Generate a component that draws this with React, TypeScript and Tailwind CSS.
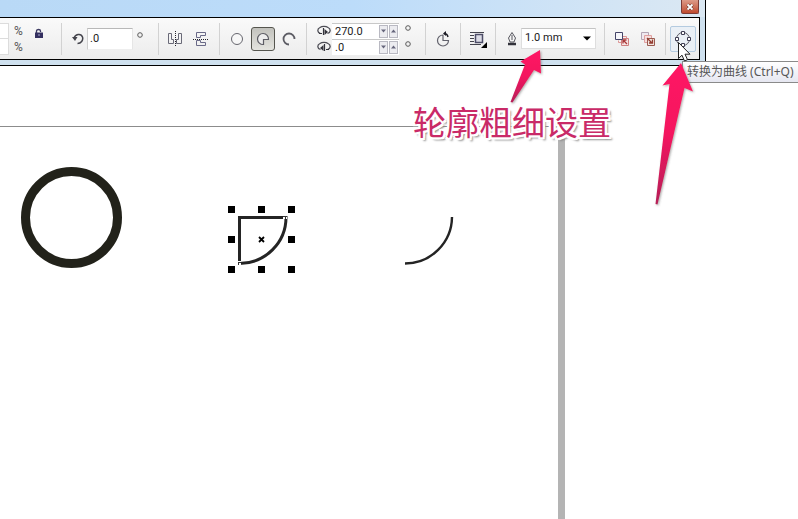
import type { ReactNode } from "react";

type IconProps = { w: number; h: number; children: ReactNode; className?: string };

function Icon({ w, h, children, className = "" }: IconProps) {
  return (
    <svg
      width={w}
      height={h}
      viewBox={`0 0 ${w} ${h}`}
      fill="none"
      stroke="#4b4b63"
      className={`block shrink-0 ${className}`}
      aria-hidden="true"
    >
      {children}
    </svg>
  );
}

function Group({ className, children }: { className: string; children: ReactNode }) {
  return (
    <div className={`flex h-full shrink-0 items-center border-r border-[#d2d2d2] ${className}`}>
      {children}
    </div>
  );
}

function Degree() {
  return (
    <Icon w={6} h={6}>
      <circle cx="3" cy="3" r="2.3" stroke="#5a5a5a" />
    </Icon>
  );
}

function IconButton({ label, className = "", children }: { label: string; className?: string; children: ReactNode }) {
  return (
    <button type="button" aria-label={label} className={`flex shrink-0 items-center justify-center ${className}`}>
      {children}
    </button>
  );
}

function Spinner({ label }: { label: string }) {
  return (
    <div className="flex gap-px pr-px">
      <button type="button" aria-label={`${label} -`} className="flex h-[13px] w-[9px] items-center justify-center border border-[#b9b9c2] bg-[#ececf0]">
        <Icon w={5} h={4}>
          <path d="M0 0.5h5L2.5 3.5z" fill="#66667c" stroke="none" />
        </Icon>
      </button>
      <button type="button" aria-label={`${label} +`} className="flex h-[13px] w-[9px] items-center justify-center border border-[#b9b9c2] bg-[#ececf0]">
        <Icon w={5} h={4}>
          <path d="M0 3.5h5L2.5 0.5z" fill="#66667c" stroke="none" />
        </Icon>
      </button>
    </div>
  );
}

function AngleRow({ label, value, flip }: { label: string; value: string; flip?: boolean }) {
  return (
    <div className="flex h-4 items-center">
      <Icon w={14} h={11} className={flip ? "-scale-x-100" : ""}>
        <path d="M3.5 8.5C0 7.5 0 4 3 2.5c2-1.5 6-1.5 8 0 3 1.5 3 5 -.5 6" stroke="#4d4d55" strokeWidth="1.3" />
        <path d="M6.500 3v7M2 8.500h3" stroke="#33333b" strokeWidth="1.2" />
        <path d="M7.500 4l3.500 3-3.500 3z" fill="#33333b" stroke="none" />
      </Icon>
      <label className="ml-px flex h-4 items-center border-t border-[#c8c8c8] bg-white">
        <input
          aria-label={label}
          defaultValue={value}
          className="h-full w-[47px] bg-transparent pl-[3px] text-[11px] leading-4 text-[#1a1a1a] outline-none"
        />
        <Spinner label={label} />
      </label>
      <div className="mb-[6px] ml-[6px]">
        <Degree />
      </div>
    </div>
  );
}

function PropertyBar() {
  return (
    <div className="mr-[5px] flex h-[43px] items-center overflow-hidden border-y border-r border-black bg-linear-to-b from-[#fafafa] to-[#ececec] font-[Roboto,'Noto_Sans',sans-serif]">
      <div className="flex h-8 w-full items-center">
        <Group className="w-[62px]">
          <div className="flex w-[9px] flex-col">
            <input aria-label="Scale X" className="h-4 w-full border border-l-0 border-[#dcdcdc] bg-white" />
            <input aria-label="Scale Y" className="h-4 w-full border border-t-0 border-l-0 border-[#dcdcdc] bg-white" />
          </div>
          <div className="ml-[5px] flex w-[10px] flex-col text-[12px] leading-4 text-[#555]">
            <span>%</span>
            <span>%</span>
          </div>
          <IconButton label="Lock ratio" className="mb-3 ml-[10px]">
            <Icon w={10} h={10}>
              <path d="M2.5 5V3c0-2 4-2 4 0v1" stroke="#3c3a62" strokeWidth="1.3" />
              <path d="M1 4.5h8V10H1z" fill="#343060" stroke="none" />
              <path d="M5 6v2" stroke="#a9a7cc" />
            </Icon>
          </IconButton>
        </Group>

        <Group className="w-[97px] pl-[10px]">
          <Icon w={12} h={12}>
            <path d="M2 5.5C3 1 9 0 10.5 4c1 3.5-1.5 6.5-5 6.5" stroke="#44444c" strokeWidth="1.5" />
            <path d="M0 4h5.5L3 8z" fill="#44444c" stroke="none" />
          </Icon>
          <input
            aria-label="Rotation"
            defaultValue=".0"
            className="ml-[3px] h-[22px] w-[46px] border border-b-[#eee] border-l-[#d0d0d0] border-r-[#e6e6e6] border-t-[#b8b8b8] bg-white pl-[2px] text-[11px] text-[#1a1a1a] outline-none"
          />
          <div className="mb-2 ml-1">
            <Degree />
          </div>
        </Group>

        <Group className="w-[61px] gap-[10px] pl-2">
          <IconButton label="Mirror horizontally">
            <Icon w={16} h={16}>
              <path d="M1.5 2.5h3v6h2v4h-5zM14.5 2.5h-3v6h-2v4h5z" stroke="#6a6a78" />
              <path d="M8.5 0v16" stroke="#22222a" strokeDasharray="1 1" />
            </Icon>
          </IconButton>
          <IconButton label="Mirror vertically">
            <Icon w={16} h={16}>
              <path d="M12.5 1.5h-9v5h4v-2h5zM12.5 14.500h-9v-5h4v2h5z" stroke="#6a6a88" />
              <path d="M0 8.5h16" stroke="#22222a" strokeDasharray="1 1" />
            </Icon>
          </IconButton>
        </Group>

        <Group className="w-[87px] pl-[10px]">
          <IconButton label="Ellipse">
            <Icon w={14} h={14}>
              <circle cx="7" cy="7" r="5.5" stroke="#66666e" fill="#f7f7f7" />
            </Icon>
          </IconButton>
          <IconButton label="Pie" className="ml-[7px] h-6 w-6 rounded-[3px] border border-[#55554e] bg-linear-to-b from-[#c2c2bd] to-[#e4e4df]">
            <Icon w={14} h={14}>
              <path d="M7.5 12.500V7.500h5A5.500 5.500 0 1 0 7.500 12.500z" stroke="#5c5c64" fill="#ededed" strokeWidth="1.2" />
            </Icon>
          </IconButton>
          <IconButton label="Arc" className="ml-[7px]">
            <Icon w={14} h={14}>
              <path d="M7 12.500A5.500 5.500 0 1 1 12.500 7" stroke="#5c5c64" strokeWidth="1.800" />
            </Icon>
          </IconButton>
        </Group>

        <Group className="w-[119px] pl-[10px]">
          <div className="flex flex-col">
            <AngleRow label="Start angle" value="270.0" />
            <AngleRow label="End angle" value=".0" flip />
          </div>
        </Group>

        <Group className="w-[35px] justify-center">
          <IconButton label="Direction">
            <Icon w={14} h={16}>
              <path d="M7 4a5.500 5.500 0 1 0 5.500 5.500H7z" stroke="#62626c" strokeWidth="1.2" />
              <path d="M8 2.500c2 0 3.500 1 4 3.500" stroke="#1c1c24" strokeWidth="1.400" />
              <path d="M7 2.500L10 0v5z" fill="#1c1c24" stroke="none" />
            </Icon>
          </IconButton>
        </Group>

        <Group className="w-[35px] justify-center">
          <IconButton label="Wrap text">
            <Icon w={18} h={18}>
              <path d="M1 2.500h14M1 5.500h4M1 8.500h4M1 11.500h4M1 14.500h11" stroke="#44444e" />
              <path d="M6.500 4.500h7v8h-7z" stroke="#4d4d68" strokeWidth="1.500" fill="#dcdce6" />
              <path d="M18 12v6h-6z" fill="#000" stroke="none" />
            </Icon>
          </IconButton>
        </Group>

        <Group className="w-[109px] pl-[10px]">
          <Icon w={12} h={14}>
            <path d="M6 .5L2.500 6l1.500 4h4l1.500-4z" stroke="#55555d" fill="#f4f4f4" />
            <path d="M6 3v5" stroke="#55555d" />
            <path d="M2 12h8" stroke="#33333b" strokeWidth="2.500" />
          </Icon>
          <div className="relative ml-[3px] flex h-[21px] w-[75px] items-center border border-[#dedede] border-t-[#c4c4c4] bg-white">
            <select aria-label="Outline width" className="h-full w-full appearance-none bg-transparent pl-[3px] text-[11px] text-[#1a1a1a] outline-none">
              <option>1.0 mm</option>
            </select>
            <Icon w={8} h={5} className="pointer-events-none absolute right-1">
              <path d="M0 0.500h8L4 4.500z" fill="#000" stroke="none" />
            </Icon>
          </div>
        </Group>

        <Group className="w-[61px] gap-[10px] pl-[9px]">
          <IconButton label="To front">
            <Icon w={16} h={16}>
              <path d="M8.500 5.500h4v4M4.500 9.500v2h3" stroke="#dd9696" />
              <path d="M7.500 7.500h7v7h-7z" stroke="#cf8080" fill="#f7e4e4" />
              <path d="M13 13L9.500 9.500M9 12.500V9h3.500" stroke="#a93838" strokeWidth="1.300" />
              <path d="M1.500 1.500h7v7h-7z" stroke="#454568" fill="#f6f6fa" />
            </Icon>
          </IconButton>
          <IconButton label="To back">
            <Icon w={16} h={16}>
              <path d="M1.500 1.500h7v7h-7z" stroke="#b3a4b4" fill="#efe9ef" />
              <path d="M4.500 4.500h7v7h-7z" stroke="#e0a0a0" fill="#f5dede" />
              <path d="M7.500 7.500h7v7h-7z" stroke="#9a5b50" fill="#f2e5e0" />
              <path d="M7 7l5 5M12.500 8.500V12H9" stroke="#943c30" strokeWidth="1.300" />
            </Icon>
          </IconButton>
        </Group>

        <IconButton label="Convert to curves" className="ml-1 h-[26px] w-[26px] rounded-[2px] border border-[#b4cbe0] bg-[#eaf0f6]">
          <Icon w={18} h={18}>
            <circle cx="9" cy="9" r="6.500" stroke="#55555f" />
            <path d="M7.500 1.500h3v3h-3zM7.500 13.500h3v3h-3zM1.500 7.500h3v3h-3zM13.500 7.500h3v3h-3z" stroke="#3f3f55" fill="#fff" />
          </Icon>
        </IconButton>
      </div>
    </div>
  );
}

function Drawing() {
  const handles = [
    [231, 209], [261, 209], [291, 209],
    [231, 239], [291, 239],
    [231, 269], [261, 269], [291, 269],
  ];
  return (
    <svg width="798" height="519" viewBox="0 0 798 519" fill="none" className="pointer-events-none absolute left-0 top-0" aria-hidden="true">
      <circle cx="71.500" cy="217.500" r="46" stroke="#22221a" strokeWidth="9" />
      <path d="M239.500 263.500V217.500H286A47 46 0 0 1 239.500 263.500z" stroke="#242424" strokeWidth="3" />
      {handles.map(([x, y]) => (
        <rect key={`${x}-${y}`} x={x - 3} y={y - 3} width="7" height="7" fill="#000" />
      ))}
      <path d="M259 237l5 5M264 237l-5 5" stroke="#000" strokeWidth="1.800" />
      <path d="M283 215h4v4h-4zM237 261h4v4h-4z" fill="#fff" />
      <path d="M283 216.500h4M285.500 216v3M238.500 262v3M238 262.500h3" stroke="#333" />
      <path d="M452 217a47 47 0 0 1-47 46.500" stroke="#242424" strokeWidth="2.400" />
    </svg>
  );
}

function Pointers() {
  return (
    <svg width="798" height="519" viewBox="0 0 798 519" className="pointer-events-none absolute left-0 top-0" aria-hidden="true">
      <defs>
        <linearGradient id="pink" x1="0" y1="0" x2="0" y2="1">
          <stop offset="0" stopColor="#ff1464" />
          <stop offset="0.5" stopColor="#f4155f" />
          <stop offset="1" stopColor="#b52058" />
        </linearGradient>
        <filter id="drop" x="-20%" y="-20%" width="150%" height="150%">
          <feDropShadow dx="1" dy="1" stdDeviation="1" floodColor="#555" floodOpacity="0.5" />
        </filter>
      </defs>
      <path d="M678.500 42.500v16l3.500-3.300 2.500 5.800 3-1.300-2.500-5.500h5z" fill="#fff" stroke="#222" />
      <g filter="url(#drop)" fill="url(#pink)">
        <path d="M540 50L520.500 61.500l4.500 3L510.500 102l2 .5L534 70l7 3.500z" />
        <path d="M681 63l-18.500 22.500 7-1.500L655.500 204l2 .5L684.500 88l8.500 3.500z" />
      </g>
    </svg>
  );
}

export default function App() {
  return (
    <main className="relative flex min-h-screen flex-col overflow-hidden bg-white font-['Noto_Sans','Noto_Sans_CJK_SC',sans-serif]">
      <header className="mr-[92px] border-b border-r border-black bg-[#cfe1ef]">
        <div className="flex h-[17px] items-start justify-end bg-linear-to-r from-[#b9d9f6] via-[#bcdcfa] to-[#dbe8f3] pr-[6px]">
          <button type="button" aria-label="Close" className="flex h-[14px] w-[18px] items-center justify-center rounded-b-[2px] border border-t-0 border-[#7c3c36] bg-linear-to-b from-[#dc9a88] to-[#bf4a2e]">
            <Icon w={8} h={8}>
              <path d="M1.500 1.500l5 5M6.500 1.500l-5 5" stroke="#5c2a22" strokeWidth="3" />
              <path d="M1.500 1.500l5 5M6.500 1.500l-5 5" stroke="#fff" strokeWidth="1.800" />
            </Icon>
          </button>
        </div>
        <PropertyBar />
        <div className="h-[5px]" />
      </header>

      <section className="flex flex-1 pt-[60px]">
        <div className="w-[558px] border-t border-[#8c8c8c]" />
        <div className="mt-2 w-[7px] bg-[#b4b4b4]" />
      </section>

      <Drawing />

      <div
        role="tooltip"
        className="absolute left-[682px] right-0 top-[61px] h-[22px] whitespace-nowrap border-y border-l border-[#8a8a8a] bg-linear-to-b from-white to-[#e6e7f1] pl-1 text-[12px] leading-5 text-[#575757]"
      >
        转换为曲线 (Ctrl+Q)
      </div>

      <p className="absolute left-[413px] top-[101px] whitespace-nowrap text-[33px] leading-[44px] text-[#c92a67] [text-shadow:2px_0_0_#fff,-2px_0_0_#fff,0_2px_0_#fff,0_-2px_0_#fff,2px_2px_0_#fff,-2px_-2px_0_#fff,2px_-2px_0_#fff,-2px_2px_0_#fff,3px_3px_2px_#888]">
        轮廓粗细设置
      </p>

      <Pointers />
    </main>
  );
}
